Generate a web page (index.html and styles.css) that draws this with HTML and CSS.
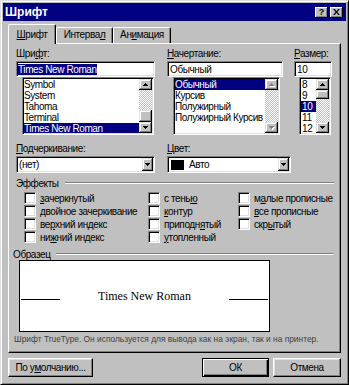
FILE: index.html
```html
<!DOCTYPE html>
<html lang="ru">
<head>
<meta charset="UTF-8">
<title>Шрифт</title>
<link rel="stylesheet" href="styles.css">
</head>
<body>

<div class="window">
    <div class="titlebar">
        <span class="title">Шрифт</span>
        <div class="caption-btns">
            <span class="cap-btn help">?</span>
            <span class="cap-btn">
                <svg width="7" height="6" viewBox="0 0 8 7"><path d="M0 0h2l2 2.5L6 0h2L5 3.5 8 7H6L4 4.5 2 7H0l3-3.5z" fill="#000"/></svg>
            </span>
        </div>
    </div>

    <div class="main">
        <div class="tabs">
            <div class="tab active"><u>Ш</u>рифт</div>
            <div class="tab t-interval">Интерва<u>л</u></div>
            <div class="tab t-anim">Ан<u>и</u>мация</div>
        </div>

        <div class="panel">
            <div class="pickers">
                <div class="picker p-font">
                    <div class="lbl">Шри<u>ф</u>т:</div>
                    <div class="field"><span class="sel-text">Times New Roman</span></div>
                    <div class="list">
                        <div class="items">
                            <div>Symbol</div>
                            <div>System</div>
                            <div>Tahoma</div>
                            <div>Terminal</div>
                            <div class="sel">Times New Roman</div>
                        </div>
                        <div class="scrollbar">
                            <div class="sb-btn"><svg width="5" height="3"><path d="M2 0h1v1h1v1h1v1H0V2h1V1h1z" fill="#000"/></svg></div>
                            <div class="sb-track" style="height: 20px"></div>
                            <div class="sb-thumb" style="height: 12px"></div>
                            <div class="sb-track"></div>
                            <div class="sb-btn"><svg width="5" height="3"><path d="M0 0h5v1H4v1H3v1H2V2H1V1H0z" fill="#000"/></svg></div>
                        </div>
                    </div>
                </div>

                <div class="picker p-style">
                    <div class="lbl"><u>Н</u>ачертание:</div>
                    <div class="field">Обычный</div>
                    <div class="list">
                        <div class="items">
                            <div class="sel">Обычный</div>
                            <div>Курсив</div>
                            <div>Полужирный</div>
                            <div>Полужирный Курсив</div>
                        </div>
                        <div class="scrollbar">
                            <div class="sb-btn off"><svg width="6" height="4"><path d="M3 1h1v1h1v1h1v1H1V3h1V2h1z" fill="#fff"/><path d="M2 0h1v1h1v1h1v1H0V2h1V1h1z" fill="#808080"/></svg></div>
                            <div class="sb-track"></div>
                            <div class="sb-btn off"><svg width="6" height="4"><path d="M1 1h5v1H5v1H4v1H3V3H2V2H1z" fill="#fff"/><path d="M0 0h5v1H4v1H3v1H2V2H1V1H0z" fill="#808080"/></svg></div>
                        </div>
                    </div>
                </div>

                <div class="picker p-size">
                    <div class="lbl"><u>Р</u>азмер:</div>
                    <div class="field">10</div>
                    <div class="list">
                        <div class="items">
                            <div>8</div>
                            <div>9</div>
                            <div class="sel">10</div>
                            <div>11</div>
                            <div>12</div>
                        </div>
                        <div class="scrollbar">
                            <div class="sb-btn"><svg width="5" height="3"><path d="M2 0h1v1h1v1h1v1H0V2h1V1h1z" fill="#000"/></svg></div>
                            <div class="sb-thumb" style="height: 9px"></div>
                            <div class="sb-track"></div>
                            <div class="sb-btn"><svg width="5" height="3"><path d="M0 0h5v1H4v1H3v1H2V2H1V1H0z" fill="#000"/></svg></div>
                        </div>
                    </div>
                </div>
            </div>

            <div class="combos">
                <div class="c-under">
                    <div class="lbl"><u>П</u>одчеркивание:</div>
                    <div class="combo">
                        <div class="combo-val">(нет)</div>
                        <div class="dd-btn"><svg width="5" height="3"><path d="M0 0h5v1H4v1H3v1H2V2H1V1H0z" fill="#000"/></svg></div>
                    </div>
                </div>
                <div class="c-color">
                    <div class="lbl"><u>Ц</u>вет:</div>
                    <div class="combo">
                        <div class="combo-val"><span class="swatch"></span>Авто</div>
                        <div class="dd-btn"><svg width="5" height="3"><path d="M0 0h5v1H4v1H3v1H2V2H1V1H0z" fill="#000"/></svg></div>
                    </div>
                </div>
            </div>

            <div class="group-head effects-head">
                <span>Эффекты</span>
                <div class="line"></div>
            </div>
            <div class="checks">
                <div class="check"><span class="box"></span><span><u>з</u>ачеркнутый</span></div>
                <div class="check"><span class="box"></span><span><u>д</u>войное зачеркивание</span></div>
                <div class="check"><span class="box"></span><span>ве<u>р</u>хний индекс</span></div>
                <div class="check"><span class="box"></span><span>ни<u>ж</u>ний индекс</span></div>
                <div class="check"><span class="box"></span><span>с тень<u>ю</u></span></div>
                <div class="check"><span class="box"></span><span><u>к</u>онтур</span></div>
                <div class="check"><span class="box"></span><span>приподн<u>я</u>тый</span></div>
                <div class="check"><span class="box"></span><span><u>у</u>топленный</span></div>
                <div class="check"><span class="box"></span><span>м<u>а</u>лые прописные</span></div>
                <div class="check"><span class="box"></span><span><u>в</u>се прописные</span></div>
                <div class="check"><span class="box"></span><span>скр<u>ы</u>тый</span></div>
            </div>

            <div class="group-head sample-head">
                <span>Образец</span>
                <div class="line"></div>
            </div>
            <div class="preview">
                <div class="sample-row">
                    <div class="rule"></div>
                    <span class="sample-text">Times New Roman</span>
                    <div class="rule"></div>
                </div>
            </div>
            <div class="note">Шрифт TrueType. Он используется для вывода как на экран, так и на принтер.</div>
        </div>

        <div class="buttons">
            <div class="btn btn-reset">По у<u>м</u>олчанию...</div>
            <div class="spacer"></div>
            <div class="btn btn-ok">ОК</div>
            <div class="btn btn-cancel">Отмена</div>
        </div>
    </div>
</div>

</body>
</html>
```

FILE: styles.css
```css
* {
    box-sizing: border-box;
}
body {
    margin: 0;
    font-family: "Liberation Sans", Arial, sans-serif;
    font-size: 10px;
    letter-spacing: -0.4px;
    color: #000;
    background: #c0c0c0;
}
u {
    text-decoration: underline;
    text-underline-offset: 1px;
}

/* window frame */
.window {
    width: 349px;
    height: 385px;
    background: #c0c0c0;
    border: 1px solid;
    border-color: #dfdfdf #000 #000 #dfdfdf;
    box-shadow: inset 1px 1px #fff, inset -1px -1px #808080;
    padding: 2px;
}
.titlebar {
    height: 18px;
    background: #000080;
    color: #fff;
    display: flex;
    align-items: center;
    justify-content: space-between;
    padding: 0 3px 0 2px;
}
.title {
    font-weight: bold;
    font-size: 12px;
    letter-spacing: 0;
}
.caption-btns {
    display: flex;
    gap: 2px;
}
.cap-btn {
    width: 13px;
    height: 11px;
    background: #c0c0c0;
    color: #000;
    box-shadow: inset -1px -1px #000, inset 1px 1px #fff, inset -2px -2px #808080;
    display: flex;
    align-items: center;
    justify-content: center;
}
.cap-btn.help {
    font-weight: bold;
    font-size: 9px;
    letter-spacing: 0;
    line-height: 9px;
}

.main {
    padding: 3px 5px 0;
}

/* tabs */
.tabs {
    display: flex;
    align-items: flex-end;
    height: 19px;
}
.tab {
    height: 16px;
    border: 1px solid;
    border-bottom: none;
    border-color: #fff #000 #fff #fff;
    border-radius: 2px 2px 0 0;
    box-shadow: inset -1px 0 #808080;
    line-height: 12px;
    padding-top: 1px;
    text-align: center;
}
.tab.active {
    width: 48px;
    height: 20px;
    margin-bottom: -1px;
    padding-top: 4px;
    position: relative;
    z-index: 1;
    background: #c0c0c0;
}
.t-interval {
    width: 57px;
}
.t-anim {
    width: 58px;
}

.panel {
    height: 310px;
    border: 1px solid;
    border-color: #fff #000 #000 #fff;
    box-shadow: inset -1px -1px #808080;
    padding: 4px 6px 0 7px;
}

.lbl {
    height: 12px;
    line-height: 12px;
    margin-bottom: 1px;
    white-space: nowrap;
}

/* sunken fields */
.field, .list, .combo, .box {
    background: #fff;
    border: 1px solid;
    border-color: #808080 #fff #fff #808080;
    box-shadow: inset 1px 1px #000, inset -1px -1px #dfdfdf;
}

.pickers {
    display: flex;
}
.p-font {
    width: 139px;
    margin-right: 12px;
}
.p-style {
    width: 116px;
    margin-right: 11px;
}
.p-size {
    width: 38px;
}
.field {
    height: 16px;
    padding: 1px 1px 0 2px;
    line-height: 13px;
    white-space: nowrap;
    overflow: hidden;
}
.p-font .field {
    padding-left: 1px;
}
.sel-text {
    display: inline-block;
    background: #000080;
    color: #fff;
    line-height: 11px;
    margin-top: 1px;
    vertical-align: top;
}

.list {
    display: flex;
    height: 58px;
    padding: 1px;
    overflow: hidden;
}
.p-font .list {
    width: 132px;
    margin-left: 6px;
}
.p-style .list {
    width: 107px;
    margin-left: 6px;
}
.p-size .list {
    width: 32px;
    margin-left: 5px;
}
.items {
    flex: 1;
    overflow: hidden;
}
.items div {
    height: 11px;
    line-height: 11px;
    white-space: nowrap;
}
.items .sel {
    background: #000080;
    color: #fff;
}
.p-size .items div {
    padding-left: 1px;
}

/* scrollbars */
.scrollbar {
    width: 13px;
    display: flex;
    flex-direction: column;
}
.sb-btn, .sb-thumb, .dd-btn {
    background: #c0c0c0;
    box-shadow: inset -1px -1px #000, inset 1px 1px #dfdfdf, inset -2px -2px #808080, inset 2px 2px #fff;
}
.sb-btn {
    height: 11px;
    display: flex;
    align-items: center;
    justify-content: center;
}
.sb-btn svg {
    display: block;
}
.sb-track {
    flex: 1;
    background: repeating-conic-gradient(#fff 0 25%, #c0c0c0 0 50%) 0 0 / 2px 2px;
}
.sb-track[style] {
    flex: none;
}

/* combos */
.combos {
    display: flex;
    margin-top: 8px;
}
.c-under {
    width: 139px;
    margin-right: 12px;
}
.c-color {
    width: 124px;
}
.combo {
    height: 17px;
    display: flex;
    padding: 1px;
}
.combo-val {
    flex: 1;
    display: flex;
    align-items: center;
    padding-left: 1px;
    white-space: nowrap;
}
.swatch {
    width: 13px;
    height: 10px;
    background: #000;
    margin: 0 5px 0 1px;
}
.dd-btn {
    width: 11px;
    display: flex;
    align-items: center;
    justify-content: center;
}
.dd-btn svg {
    display: block;
}

/* groups */
.group-head {
    display: flex;
    align-items: center;
    height: 12px;
    white-space: nowrap;
}
.group-head .line {
    flex: 1;
    height: 2px;
    margin-left: 6px;
    border-top: 1px solid #808080;
    border-bottom: 1px solid #fff;
}
.effects-head {
    margin-top: 4px;
}
.checks {
    display: grid;
    grid-template-columns: 124px 90px 1fr;
    grid-template-rows: repeat(4, 12px);
    grid-auto-flow: column;
    row-gap: 1px;
    margin-top: 3px;
    padding-left: 8px;
}
.check {
    display: flex;
    align-items: center;
    gap: 4px;
    white-space: nowrap;
}
.box {
    width: 12px;
    height: 12px;
    flex: none;
}

.sample-head {
    margin-top: 5px;
    margin-left: -3px;
}
.sample-head .line {
    margin-left: 6px;
    margin-right: 1px;
}
.preview {
    width: 251px;
    height: 72px;
    margin-left: 3px;
    background: #fff;
    border: 1px solid #000;
    padding: 28px 1px 0;
}
.sample-row {
    display: flex;
    align-items: baseline;
    justify-content: space-between;
    line-height: 14px;
}
.rule {
    width: 39px;
    height: 1px;
    background: #000;
}
.sample-text {
    font-family: "Liberation Serif", "Times New Roman", serif;
    font-size: 12px;
    letter-spacing: 0;
}
.note {
    margin: 2px 0 0 -2px;
    font-size: 8.4px;
    line-height: 11px;
    letter-spacing: 0;
    color: #404040;
    white-space: nowrap;
}

/* buttons */
.buttons {
    display: flex;
    margin-top: 5px;
}
.spacer {
    flex: 1;
}
.btn {
    height: 19px;
    border: 1px solid;
    border-color: #fff #000 #000 #fff;
    box-shadow: inset -1px -1px #808080, inset 1px 1px #dfdfdf;
    display: flex;
    align-items: center;
    justify-content: center;
    white-space: nowrap;
}
.btn-reset {
    width: 85px;
}
.btn-ok {
    width: 67px;
    margin-right: 4px;
    border-color: #000;
    box-shadow: inset 1px 1px #fff, inset -1px -1px #000, inset -2px -2px #808080;
}
.btn-cancel {
    width: 68px;
}
```
